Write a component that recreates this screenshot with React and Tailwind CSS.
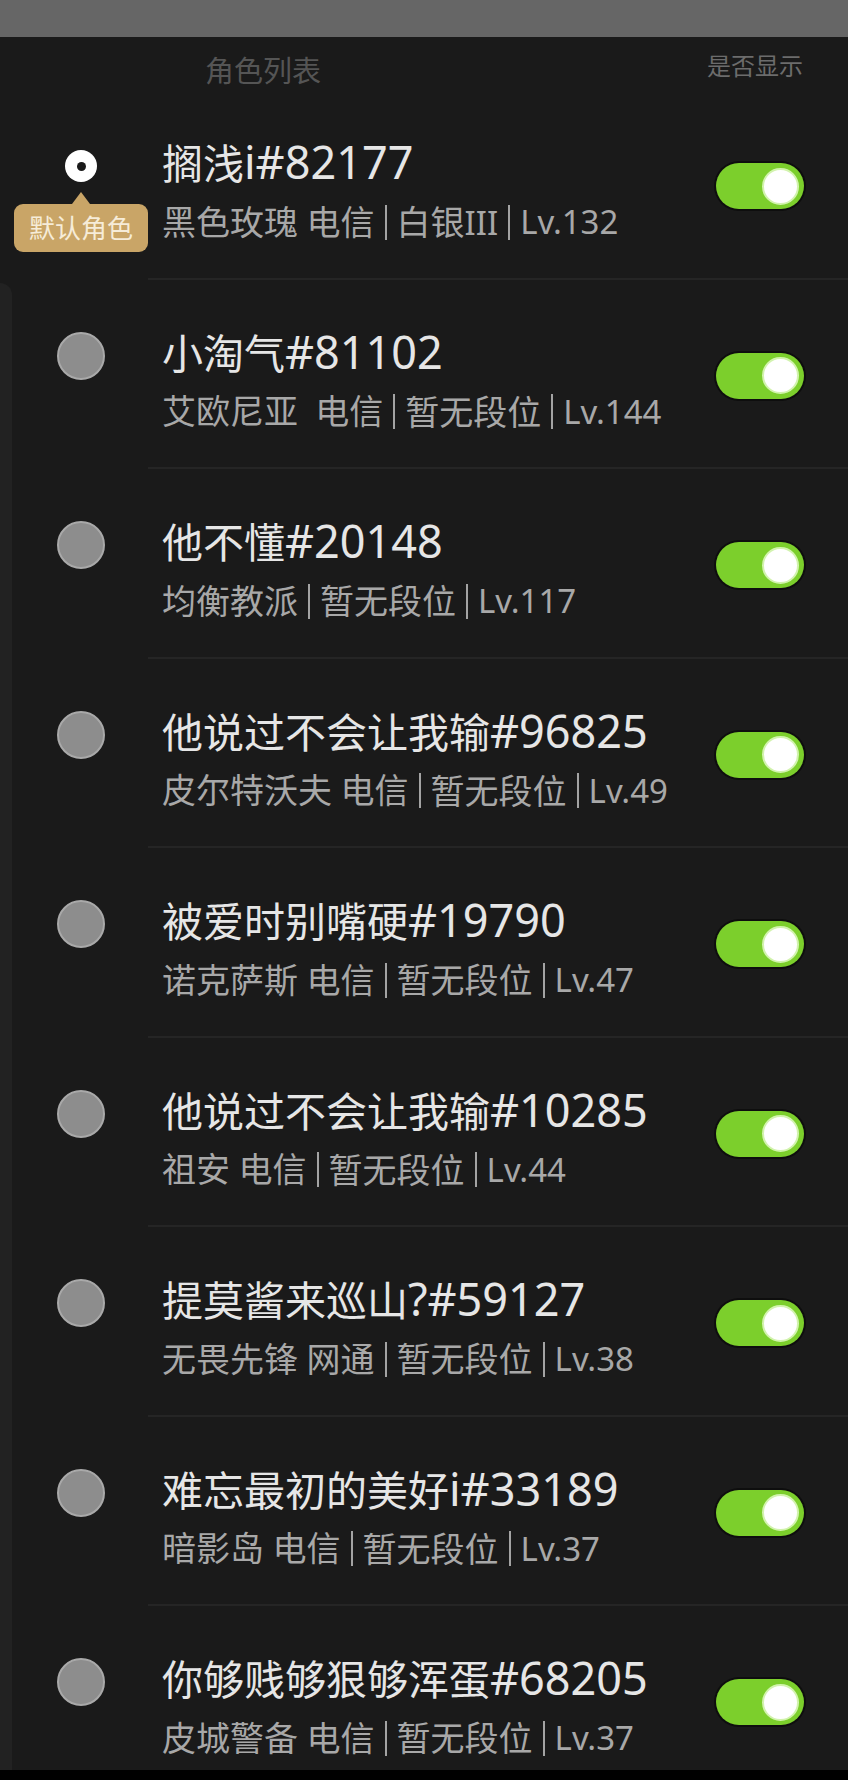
import { useState } from "react";

// role list, first one is the default role
const roles = [
  { name: "搁浅i#82177", server: "黑色玫瑰 电信", rank: "白银III", level: "Lv.132" },
  { name: "小淘气#81102", server: "艾欧尼亚  电信", rank: "暂无段位", level: "Lv.144" },
  { name: "他不懂#20148", server: "均衡教派", rank: "暂无段位", level: "Lv.117" },
  { name: "他说过不会让我输#96825", server: "皮尔特沃夫 电信", rank: "暂无段位", level: "Lv.49" },
  { name: "被爱时别嘴硬#19790", server: "诺克萨斯 电信", rank: "暂无段位", level: "Lv.47" },
  { name: "他说过不会让我输#10285", server: "祖安 电信", rank: "暂无段位", level: "Lv.44" },
  { name: "提莫酱来巡山?#59127", server: "无畏先锋 网通", rank: "暂无段位", level: "Lv.38" },
  { name: "难忘最初的美好i#33189", server: "暗影岛 电信", rank: "暂无段位", level: "Lv.37" },
  { name: "你够贱够狠够浑蛋#68205", server: "皮城警备 电信", rank: "暂无段位", level: "Lv.37" },
];

const Mixed = ({ text, latin }) =>
  text.split(/([\x00-\x7F]+)/).map((part, i) =>
    /^[\x00-\x7F]+$/.test(part) ? (
      <span key={i} className={latin}>
        {part}
      </span>
    ) : (
      <span key={i}>{part}</span>
    )
  );

// thin vertical divider between server / rank / level
const Sep = () => <span className="mx-[10px] inline-block h-[35px] w-[2px] shrink-0 bg-[#a3a3a3]" />;

const Toggle = ({ on, onClick }) => (
  <button
    onClick={onClick}
    className={`flex h-[46px] w-[88px] items-center rounded-full px-[5px] shadow-[0_0_0_2px_#0e0e0e] ${
      on ? "justify-end bg-[#7ccf2c]" : "justify-start bg-[#555]"
    }`}
  >
    <span className="h-[37px] w-[37px] rounded-full border-[2px] border-[#d2f3ae] bg-white" />
  </button>
);

const RoleRow = ({ role, selected, shown, onSelect, onToggle, last }) => (
  <div className="flex h-[189.5px] shrink-0 flex-col">
    <div className="flex flex-1">
      <div className="relative w-[162px] shrink-0 pt-[52px]">
        <button onClick={onSelect} className="mx-auto flex h-[48px] w-[48px] items-center justify-center">
          {selected ? (
            <span className="flex h-[32px] w-[32px] items-center justify-center rounded-full bg-white">
              <span className="h-[9px] w-[9px] rounded-full bg-[#1a1a1a]" />
            </span>
          ) : (
            <span className="h-[48px] w-[48px] rounded-full border-[2px] border-[#a9a9a9] bg-[#8d8d8d]" />
          )}
        </button>
        {selected && (
          <div className="absolute left-[14px] top-[102px] flex flex-col items-center">
            <div className="h-0 w-0 border-b-[12px] border-l-[9px] border-r-[9px] border-b-[#c9a567] border-l-transparent border-r-transparent" />
            <div className="flex h-[48px] w-[134px] items-center justify-center rounded-[9px] bg-[#c9a567] text-[26px] leading-none text-[#f6ecd8]">
              默认角色
            </div>
          </div>
        )}
      </div>

      <div className="min-w-0 flex-1 pt-[50px]">
        <div className="h-[44px] whitespace-nowrap text-[41px] leading-[44px] text-[#e6e6e6]">
          <Mixed text={role.name} latin="text-[45px]" />
        </div>
        <div className="mt-[18px] flex h-[40px] items-center whitespace-pre text-[34px] leading-[40px] text-[#a8a8a8]">
          <span>
            <Mixed text={role.server} latin="text-[33px]" />
          </span>
          <Sep />
          <span>
            <Mixed text={role.rank} latin="text-[33px]" />
          </span>
          <Sep />
          <span className="text-[33px]">{role.level}</span>
        </div>
      </div>

      <div className="shrink-0 pr-[44px] pt-[73px]">
        <Toggle on={shown} onClick={onToggle} />
      </div>
    </div>
    {!last && <div className="ml-[148px] h-[2px] bg-[#252525]" />}
  </div>
);

export default function App() {
  const [selected, setSelected] = useState(0);
  const [shown, setShown] = useState(roles.map(() => true));

  return (
    <div className="flex h-[1780px] w-[848px] flex-col overflow-hidden bg-[#1a1a1a] font-['Noto_Sans','Noto_Sans_CJK_SC',sans-serif]">
      {/* status area */}
      <div className="h-[37px] shrink-0 bg-[#666666]" />

      <div className="relative flex h-[1733px] flex-col overflow-hidden">
        {/* edge of the sheet underneath */}
        <div className="absolute bottom-0 left-0 top-[246px] w-[12px] rounded-tr-[12px] bg-[#222222]" />

        <div className="flex h-[53px] shrink-0 items-start justify-between">
          <div className="pl-[205px] pt-[19px] text-[29px] leading-[29px] text-[#555555]">角色列表</div>
          <div className="pr-[45px] pt-[17px] text-[24px] leading-[24px] text-[#6c6c6c]">是否显示</div>
        </div>

        <div className="relative flex flex-col">
          {roles.map((role, i) => (
            <RoleRow
              key={i}
              role={role}
              selected={selected === i}
              shown={shown[i]}
              last={i === roles.length - 1}
              onSelect={() => setSelected(i)}
              onToggle={() => setShown(shown.map((s, j) => (j === i ? !s : s)))}
            />
          ))}
        </div>
      </div>

      <div className="h-[10px] shrink-0 bg-black" />
    </div>
  );
}
